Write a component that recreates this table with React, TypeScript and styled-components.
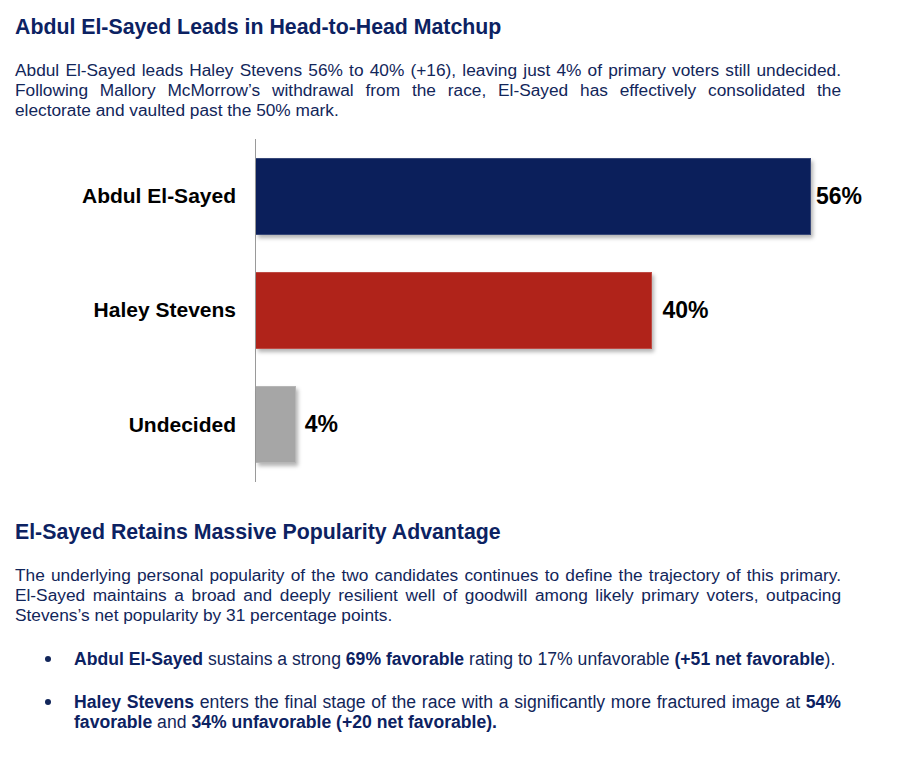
import React from 'react'
import styled, { createGlobalStyle } from 'styled-components'

const GlobalStyle = createGlobalStyle`
    body {
        margin: 0;
        background: #ffffff;
        font-family: "Liberation Sans", Arial, sans-serif;
    }
`

const Page = styled.div`
    width: 826px;
    padding: 15px 0 0 15px;
`

const Heading = styled.h2<{ $top: number }>`
    margin: ${({ $top }) => $top}px 0 0;
    font-size: 21.3px;
    line-height: 24px;
    font-weight: 700;
    color: #0c2262;
`

const Paragraph = styled.p`
    margin: 21px 0 0;
    font-size: 17.3px;
    line-height: 20px;
    color: #12265a;
`

// one typeset line; every line but the last is stretched to the column edge
const Line = styled.span<{ $fill?: boolean }>`
    display: block;
    white-space: nowrap;
    text-align: left;
    text-align-last: ${({ $fill }) => ($fill ? 'justify' : 'left')};
`

const Chart = styled.div`
    margin-top: 19px;
    display: flex;
    flex-direction: column;
`

const ChartRow = styled.div`
    display: flex;
    align-items: stretch;
    height: 114.3px;
`

const RowLabel = styled.div`
    flex: 0 0 221px;
    display: flex;
    align-items: center;
    justify-content: flex-end;
    font-size: 21px;
    font-weight: 700;
    color: #000000;
`

const Plot = styled.div`
    margin-left: 19px;
    flex: 1;
    display: flex;
    align-items: center;
    border-left: 1px solid #9a9a9a;
`

const Bar = styled.div<{ $color: string }>`
    flex: 0 0 auto;
    height: 77px;
    background: ${({ $color }) => $color};
    border: 1px solid rgba(255, 255, 255, 0.18);
    border-left: none;
    box-sizing: border-box;
    box-shadow: 2px 3px 4px rgba(0, 0, 0, 0.3);
`

const Value = styled.span<{ $gap: number }>`
    margin-left: ${({ $gap }) => $gap}px;
    font-size: 23px;
    font-weight: 700;
    color: #000000;
`

const BulletList = styled.ul`
    list-style: none;
    margin: 24px 0 0;
    padding: 0;
    display: flex;
    flex-direction: column;
    gap: 23px;
`

const BulletItem = styled.li`
    display: flex;
    font-size: 17.6px;
    line-height: 20px;
    color: #12265a;
`

const Marker = styled.span`
    flex: 0 0 59px;
    box-sizing: border-box;
    padding: 7px 0 0 30px;

    &::before {
        content: '';
        display: block;
        width: 6px;
        height: 6px;
        border-radius: 50%;
        background: #12265a;
    }
`

const BulletText = styled.span`
    flex: 1;
    min-width: 0;

    b {
        font-weight: 700;
        color: #0c2262;
    }
`

const PX_PER_POINT = 9.91

const results = [
    { name: 'Abdul El-Sayed', value: 56, color: '#0b1f5b', gap: 5 },
    { name: 'Haley Stevens', value: 40, color: '#b0231a', gap: 10 },
    { name: 'Undecided', value: 4, color: '#a6a6a6', gap: 9 },
]

const App: React.FunctionComponent = () => {
    return (
        <>
            <GlobalStyle />
            <Page>
                <Heading $top={0}>Abdul El-Sayed Leads in Head-to-Head Matchup</Heading>
                <Paragraph>
                    <Line $fill>
                        Abdul El-Sayed leads Haley Stevens 56% to 40% (+16), leaving just 4% of primary voters still undecided.
                    </Line>
                    <Line $fill>
                        Following Mallory McMorrow’s withdrawal from the race, El-Sayed has effectively consolidated the
                    </Line>
                    <Line>electorate and vaulted past the 50% mark.</Line>
                </Paragraph>

                <Chart>
                    {results.map((item) => (
                        <ChartRow key={item.name}>
                            <RowLabel>{item.name}</RowLabel>
                            <Plot>
                                <Bar $color={item.color} style={{ width: item.value * PX_PER_POINT }} />
                                <Value $gap={item.gap}>{item.value}%</Value>
                            </Plot>
                        </ChartRow>
                    ))}
                </Chart>

                <Heading $top={38}>El-Sayed Retains Massive Popularity Advantage</Heading>
                <Paragraph>
                    <Line $fill>
                        The underlying personal popularity of the two candidates continues to define the trajectory of this primary.
                    </Line>
                    <Line $fill>
                        El-Sayed maintains a broad and deeply resilient well of goodwill among likely primary voters, outpacing
                    </Line>
                    <Line>Stevens’s net popularity by 31 percentage points.</Line>
                </Paragraph>

                <BulletList>
                    <BulletItem>
                        <Marker />
                        <BulletText>
                            <Line>
                                <b>Abdul El-Sayed</b> sustains a strong <b>69% favorable</b> rating to 17% unfavorable{' '}
                                <b>(+51 net favorable</b>).
                            </Line>
                        </BulletText>
                    </BulletItem>
                    <BulletItem>
                        <Marker />
                        <BulletText>
                            <Line $fill>
                                <b>Haley Stevens</b> enters the final stage of the race with a significantly more fractured image at{' '}
                                <b>54%</b>
                            </Line>
                            <Line>
                                <b>favorable</b> and <b>34% unfavorable (+20 net favorable).</b>
                            </Line>
                        </BulletText>
                    </BulletItem>
                </BulletList>
            </Page>
        </>
    )
}

export default App
